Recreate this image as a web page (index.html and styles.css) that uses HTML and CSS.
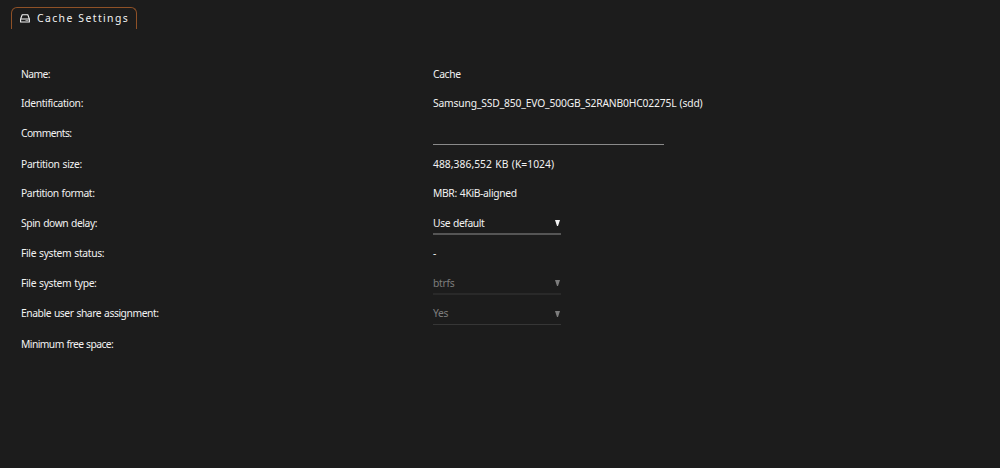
FILE: index.html
```html
<!DOCTYPE html>
<html lang="en">
<head>
<meta charset="utf-8">
<title>Cache Settings</title>
<link rel="stylesheet" href="styles.css">
</head>
<body>
<main class="page">
  <header class="tab">
    <svg class="disk" viewBox="0 0 10 9"><path d="M.6 5 2.2.8h5.6L9.4 5v3H.6V5h8.8" fill="none" stroke="currentColor" stroke-width="1.1" stroke-linejoin="round"/><path d="M5.7 6.5h.9M7.4 6.5h.9" stroke="currentColor"/></svg>
    <span class="title">Cache Settings</span>
  </header>
  <div class="settings">
    <div class="row"><span class="label tighter">Name:</span><span class="value">Cache</span></div>
    <div class="row short"><span class="label">Identification:</span><span class="value ident">Samsung_SSD_850_EVO_500GB_S2RANB0HC02275L (sdd)</span></div>
    <div class="row tall"><span class="label tighter">Comments:</span><span class="field input"></span></div>
    <div class="row"><span class="label">Partition size:</span><span class="value size">488,386,552 KB (K=1024)</span></div>
    <div class="row short"><span class="label tight">Partition format:</span><span class="value format">MBR: 4KiB-aligned</span></div>
    <div class="row"><span class="label tight">Spin down delay:</span><span class="field select"><span>Use default</span><svg class="arrow" viewBox="0 0 5 6"><path d="M0 0h5L3 6H2z"/></svg></span></div>
    <div class="row"><span class="label">File system status:</span><span class="value">-</span></div>
    <div class="row"><span class="label">File system type:</span><span class="field select disabled"><span>btrfs</span><svg class="arrow" viewBox="0 0 5 6"><path d="M0 0h5L3 6H2z"/></svg></span></div>
    <div class="row tall"><span class="label tight">Enable user share assignment:</span><span class="field select disabled thin"><span>Yes</span><svg class="arrow" viewBox="0 0 5 6"><path d="M0 0h5L3 6H2z"/></svg></span></div>
    <div class="row"><span class="label tighter">Minimum free space:</span></div>
  </div>
</main>
</body>
</html>
```
FILE: styles.css
```css
* { box-sizing: border-box; }
body { margin: 0; background: #1c1c1c; color: #f2f2f2; font: 10.3px/15px "Noto Sans", sans-serif; word-spacing: .6px; }
.page { height: 468px; padding: 7px 0 0 11px; overflow: hidden; }
.tab { display: flex; align-items: center; width: 126px; height: 22px; padding-left: 8px; border: 1px solid #8f5127; border-bottom: 0; border-radius: 6px 6px 0 0; }
.disk { width: 10px; height: 9px; flex: none; }
.title { margin-left: 7px; font-size: 10.4px; letter-spacing: 1.4px; white-space: nowrap; }
.settings { padding: 30px 0 0 10px; }
.row { display: grid; grid-template-columns: 412px 1fr; align-items: center; height: 30px; white-space: nowrap; }
.short { height: 29px; }
.tall { height: 31px; }
.label, .value { width: max-content; letter-spacing: -.33px; }
.tight { letter-spacing: -.43px; }
.tighter { letter-spacing: -.56px; }
.ident { letter-spacing: -.16px; }
.size { letter-spacing: .04px; }
.field { border-bottom: 1px solid #8a8a8a; align-self: start; }
.input { width: 231px; height: 27px; }
.select { display: flex; align-items: center; justify-content: space-between; width: 128px; height: 27px; padding-top: 5px; border-bottom: 2px solid #555; letter-spacing: -.4px; }
.arrow { width: 5px; height: 6px; fill: currentColor; margin-right: 1px; }
.disabled { color: #7d7d7d; border-color: #292929; letter-spacing: -.28px; }
.thin { border-bottom: 1px solid #363636; }
```
